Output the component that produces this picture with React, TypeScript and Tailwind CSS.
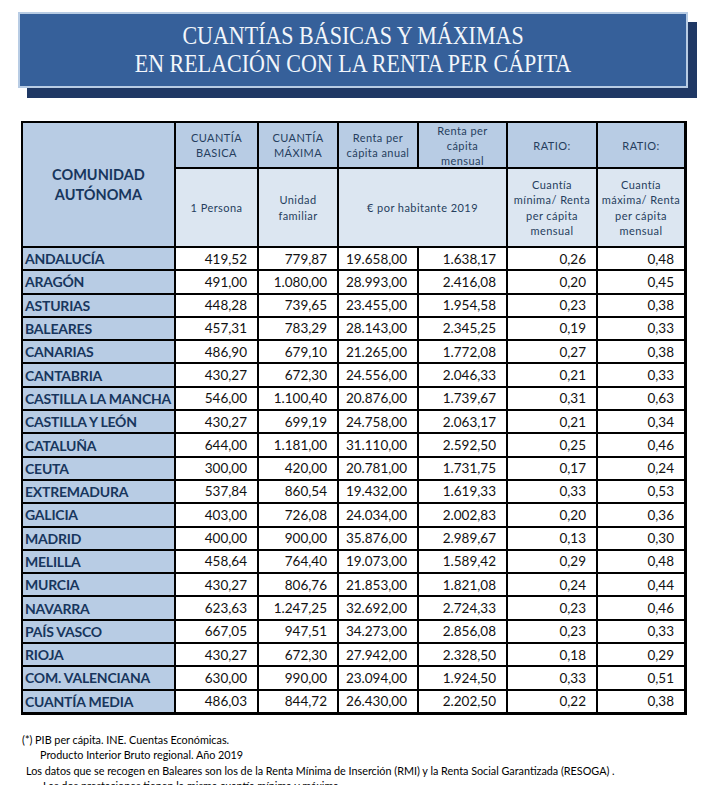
const rows: string[][] = [
  ["ANDALUCÍA", "419,52", "779,87", "19.658,00", "1.638,17", "0,26", "0,48"],
  ["ARAGÓN", "491,00", "1.080,00", "28.993,00", "2.416,08", "0,20", "0,45"],
  ["ASTURIAS", "448,28", "739,65", "23.455,00", "1.954,58", "0,23", "0,38"],
  ["BALEARES", "457,31", "783,29", "28.143,00", "2.345,25", "0,19", "0,33"],
  ["CANARIAS", "486,90", "679,10", "21.265,00", "1.772,08", "0,27", "0,38"],
  ["CANTABRIA", "430,27", "672,30", "24.556,00", "2.046,33", "0,21", "0,33"],
  ["CASTILLA LA MANCHA", "546,00", "1.100,40", "20.876,00", "1.739,67", "0,31", "0,63"],
  ["CASTILLA Y LEÓN", "430,27", "699,19", "24.758,00", "2.063,17", "0,21", "0,34"],
  ["CATALUÑA", "644,00", "1.181,00", "31.110,00", "2.592,50", "0,25", "0,46"],
  ["CEUTA", "300,00", "420,00", "20.781,00", "1.731,75", "0,17", "0,24"],
  ["EXTREMADURA", "537,84", "860,54", "19.432,00", "1.619,33", "0,33", "0,53"],
  ["GALICIA", "403,00", "726,08", "24.034,00", "2.002,83", "0,20", "0,36"],
  ["MADRID", "400,00", "900,00", "35.876,00", "2.989,67", "0,13", "0,30"],
  ["MELILLA", "458,64", "764,40", "19.073,00", "1.589,42", "0,29", "0,48"],
  ["MURCIA", "430,27", "806,76", "21.853,00", "1.821,08", "0,24", "0,44"],
  ["NAVARRA", "623,63", "1.247,25", "32.692,00", "2.724,33", "0,23", "0,46"],
  ["PAÍS VASCO", "667,05", "947,51", "34.273,00", "2.856,08", "0,23", "0,33"],
  ["RIOJA", "430,27", "672,30", "27.942,00", "2.328,50", "0,18", "0,29"],
  ["COM. VALENCIANA", "630,00", "990,00", "23.094,00", "1.924,50", "0,33", "0,51"],
  ["CUANTÍA MEDIA", "486,03", "844,72", "26.430,00", "2.202,50", "0,22", "0,38"],
];

const head1 = "flex items-center justify-center text-center bg-[#b8cce4] text-[11px] leading-[15px] tracking-[0.04em] text-[#263e5e]";
const head2 = "flex items-center justify-center text-center bg-[#dce6f1] text-[11px] leading-[15.5px] tracking-[0.04em] text-[#263e5e]";

const App = () => {
  return (
    <div className="w-[708px] h-[785px] overflow-hidden bg-white font-['Lato',sans-serif]">
      <div className="pt-[12px] pl-[18px]">
        <div className="w-[670px] h-[76px] border-2 border-[#b8cce4] bg-[#36609a] shadow-[9px_10px_0_#1f3864] flex flex-col items-center justify-center">
          <div className="font-['Liberation_Serif',serif] text-[25px] leading-[28px] text-[#f2f6fb] text-center scale-x-[0.88]">
            <div>CUANTÍAS BÁSICAS Y MÁXIMAS</div>
            <div>EN RELACIÓN CON LA RENTA PER CÁPITA</div>
          </div>
        </div>
      </div>

      <div className="ml-[21px] mt-[33px] w-[666px] grid grid-cols-[151px_81px_78px_78px_87px_88px_86px] grid-rows-[44px_77px_repeat(20,21.3px)] gap-[2px] bg-black pt-[2px] pl-[2px] pr-[3px] pb-[3px]">
        <div className="row-span-2 flex items-center justify-center text-center bg-[#b8cce4] text-[14.5px] leading-[20px] font-bold text-[#17365d]">
          COMUNIDAD
          <br />
          AUTÓNOMA
        </div>
        <div className={head1}>CUANTÍA<br />BASICA</div>
        <div className={head1}>CUANTÍA<br />MÁXIMA</div>
        <div className={head1}>Renta per<br />cápita anual</div>
        <div className={head1}>Renta per<br />cápita<br />mensual</div>
        <div className={head1}>RATIO:</div>
        <div className={head1}>RATIO:</div>

        <div className={head2}>1 Persona</div>
        <div className={head2}>Unidad<br />familiar</div>
        <div className={`${head2} col-span-2`}>€ por habitante 2019</div>
        <div className={head2}>Cuantía<br />mínima/ Renta<br />per cápita<br />mensual</div>
        <div className={head2}>Cuantía<br />máxima/ Renta<br />per cápita<br />mensual</div>

        {rows.map((r) => (
          <>
            <div key={r[0]} className="bg-[#b8cce4] flex items-center pl-[2px] text-[14px] tracking-[-0.015em] font-bold text-[#17365d] whitespace-nowrap overflow-hidden">
              {r[0]}
            </div>
            {r.slice(1).map((v, i) => (
              <div key={r[0] + i} className="bg-white flex items-center justify-end pr-[10px] text-[13.5px] text-[#111]">
                {v}
              </div>
            ))}
          </>
        ))}
      </div>

      <div className="mt-[17px] text-[10.8px] leading-[15.5px] text-black">
        <div className="pl-[22px]">(*) PIB per cápita. INE. Cuentas Económicas.</div>
        <div className="pl-[40px]">Producto Interior Bruto regional. Año 2019</div>
        <div className="pl-[26px]">
          Los datos que se recogen en Baleares son los de la Renta Mínima de Inserción (RMI) y la Renta Social Garantizada (RESOGA) .
        </div>
        <div className="pl-[43px]">Las dos prestaciones tienen la misma cuantía mínima y máxima.</div>
      </div>
    </div>
  );
};

export default App;
